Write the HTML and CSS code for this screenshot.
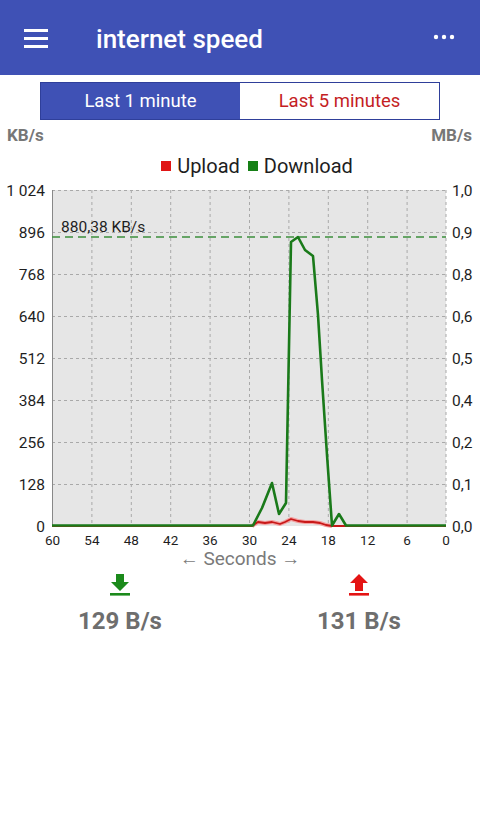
FILE: index.html
```html
<!DOCTYPE html>
<html>
	<head>
		<meta charset="UTF-8">
		<title>internet speed</title>
		<link rel="stylesheet" href="styles.css">
	</head>
	<body>
		<div id="bar">
			<svg class="menu" width="24" height="20" viewBox="0 0 24 20">
				<rect x="0" y="1" width="24" height="3" fill="#fff"/>
				<rect x="0" y="9" width="24" height="3" fill="#fff"/>
				<rect x="0" y="17" width="24" height="3" fill="#fff"/>
			</svg>
			<div class="title">internet speed</div>
			<svg class="more" width="22" height="6" viewBox="0 0 22 6">
				<circle cx="3" cy="3" r="2.2" fill="#fff"/>
				<circle cx="11" cy="3" r="2.2" fill="#fff"/>
				<circle cx="19" cy="3" r="2.2" fill="#fff"/>
			</svg>
		</div>

		<div id="tabs">
			<div class="tab on">Last 1 minute</div>
			<div class="tab off">Last 5 minutes</div>
		</div>

		<div class="units">
			<span>KB/s</span>
			<span>MB/s</span>
		</div>

		<div class="legend">
			<i class="sq red"></i><span>Upload</span>
			<i class="sq green"></i><span>Download</span>
		</div>

		<svg class="chart" width="480" height="372" viewBox="0 178 480 372">
			<!-- fond -->
			<rect x="52" y="190" width="394" height="336" fill="#e6e6e6"/>
			<!-- grille horizontale -->
			<g stroke="#a9a9a9" stroke-width="1" stroke-dasharray="3 3">
				<line x1="52" y1="190.5" x2="446" y2="190.5"/>
				<line x1="52" y1="232.5" x2="446" y2="232.5"/>
				<line x1="52" y1="274.5" x2="446" y2="274.5"/>
				<line x1="52" y1="316.5" x2="446" y2="316.5"/>
				<line x1="52" y1="358.5" x2="446" y2="358.5"/>
				<line x1="52" y1="400.5" x2="446" y2="400.5"/>
				<line x1="52" y1="442.5" x2="446" y2="442.5"/>
				<line x1="52" y1="484.5" x2="446" y2="484.5"/>
			</g>
			<!-- grille verticale -->
			<g stroke="#a9a9a9" stroke-width="1" stroke-dasharray="3 3">
				<line x1="91.9" y1="190" x2="91.9" y2="526"/>
				<line x1="131.3" y1="190" x2="131.3" y2="526"/>
				<line x1="170.7" y1="190" x2="170.7" y2="526"/>
				<line x1="210.1" y1="190" x2="210.1" y2="526"/>
				<line x1="249.5" y1="190" x2="249.5" y2="526"/>
				<line x1="288.9" y1="190" x2="288.9" y2="526"/>
				<line x1="328.3" y1="190" x2="328.3" y2="526"/>
				<line x1="367.7" y1="190" x2="367.7" y2="526"/>
				<line x1="407.1" y1="190" x2="407.1" y2="526"/>
				<line x1="446" y1="190" x2="446" y2="526"/>
			</g>
			<line x1="52.5" y1="190" x2="52.5" y2="527" stroke="#888" stroke-width="1"/>

			<!-- max -->
			<line x1="52" y1="237" x2="446" y2="237" stroke="#3d8f3d" stroke-width="1.3" stroke-dasharray="8 5"/>
			<text x="61" y="232" class="lbl">880,38 KB/s</text>

			<!-- upload -->
			<polyline fill="none" stroke="#f3a0a0" stroke-width="4" stroke-linejoin="round"
				points="252,526 258,522 265,523 272,522 280,524 285,522 291,519 298,521 305,522 313,522 320,523 326,525 332,526"/>
			<polyline fill="none" stroke="#c81818" stroke-width="1.8" stroke-linejoin="round"
				points="52,526 252,526 258,522 265,523 272,522 280,524 285,522 291,519 298,521 305,522 313,522 320,523 326,525 332,526 446,526"/>
			<!-- download -->
			<polyline fill="none" stroke="#1a7a1a" stroke-width="2.6" stroke-linejoin="round"
				points="52,525.5 253,525.5 262,508 272,483 279,514 286,503 291,242 298,237 305,250 313,256 318,315 322,380 327,455 332,525.5 339,514 346,525.5 446,525.5"/>

			<!-- axe gauche -->
			<g class="lbl" text-anchor="end">
				<text x="45" y="195.5">1 024</text>
				<text x="45" y="237.5">896</text>
				<text x="45" y="279.5">768</text>
				<text x="45" y="321.5">640</text>
				<text x="45" y="363.5">512</text>
				<text x="45" y="405.5">384</text>
				<text x="45" y="447.5">256</text>
				<text x="45" y="489.5">128</text>
				<text x="45" y="531.5">0</text>
			</g>
			<!-- axe droit -->
			<g class="lbl">
				<text x="452" y="195.5">1,0</text>
				<text x="452" y="237.5">0,9</text>
				<text x="452" y="279.5">0,8</text>
				<text x="452" y="321.5">0,6</text>
				<text x="452" y="363.5">0,5</text>
				<text x="452" y="405.5">0,4</text>
				<text x="452" y="447.5">0,2</text>
				<text x="452" y="489.5">0,1</text>
				<text x="452" y="531.5">0,0</text>
			</g>
			<!-- axe x -->
			<g class="xl" text-anchor="middle">
				<text x="52.5" y="545">60</text>
				<text x="91.9" y="545">54</text>
				<text x="131.3" y="545">48</text>
				<text x="170.7" y="545">42</text>
				<text x="210.1" y="545">36</text>
				<text x="249.5" y="545">30</text>
				<text x="288.9" y="545">24</text>
				<text x="328.3" y="545">18</text>
				<text x="367.7" y="545">12</text>
				<text x="407.1" y="545">6</text>
				<text x="446" y="545">0</text>
			</g>
		</svg>

		<div class="seconds">&larr; Seconds &rarr;</div>

		<div class="stats">
			<div class="stat">
				<svg width="20" height="22" viewBox="0 0 20 22">
					<path d="M6 0h8v8h5l-9 9-9-9h5z" fill="#1b8a1b"/>
					<rect x="0" y="19" width="20" height="2.6" fill="#1b8a1b"/>
				</svg>
				<div class="val">129 B/s</div>
			</div>
			<div class="stat">
				<svg width="20" height="22" viewBox="0 0 20 22">
					<path d="M10 0l9 9h-5v8h-8v-8h-5z" fill="#e41414"/>
					<rect x="0" y="19" width="20" height="2.6" fill="#e41414"/>
				</svg>
				<div class="val">131 B/s</div>
			</div>
		</div>
	</body>
</html>
```

FILE: styles.css
```css
*{padding: 0;margin: 0;box-sizing: border-box;}
body{background: #fff;font-family: Roboto, "Liberation Sans", sans-serif;width: 480px;}
#bar{height: 75px;background: #3f51b5;display: flex;align-items: center;padding: 0 25px 0 24px;color: #fff;}
#bar .menu{display: block;}
#bar .title{font-size: 26px;font-weight: 500;margin-left: 48px;flex: 1;margin-top: 2px;}
#bar .more{display: block;margin-top: -2px;}
#tabs{display: flex;width: 400px;height: 38px;margin: 7px auto 0;border: 1.5px solid #2f3f9a;}
#tabs .tab{flex: 1;display: flex;align-items: center;justify-content: center;font-size: 18.5px;}
#tabs .on{background: #3f51b5;color: #fff;}
#tabs .off{background: #fff;color: #c41e24;}
.units{display: flex;justify-content: space-between;padding: 0 8px 0 7px;margin-top: 5px;font-size: 17px;line-height: 20px;height: 20px;font-weight: 700;color: #777;}
.legend{display: flex;align-items: center;justify-content: center;height: 33px;padding: 8px 0 0 34px;font-size: 20px;color: #1e1e1e;}
.legend .sq{display: inline-block;width: 10px;height: 10px;margin-right: 6px;}
.legend .red{background: #e01515;}
.legend .green{background: #168016;margin-left: 8px;}
.chart{display: block;}
.lbl{font-size: 15.5px;fill: #1e1e1e;font-family: Roboto, "Liberation Sans", sans-serif;}
.xl{font-size: 13.5px;fill: #1e1e1e;font-family: Roboto, "Liberation Sans", sans-serif;}
.seconds{text-align: center;font-size: 19px;color: #7a7a7a;height: 18px;line-height: 18px;}
.stats{display: flex;justify-content: space-between;padding: 0 78px 0 77px;margin-top: 6px;}
.stat{display: flex;flex-direction: column;align-items: center;width: 86px;}
.stat svg{display: block;}
.stat .val{font-size: 24px;line-height: 28px;font-weight: 700;color: #6e6e6e;margin-top: 11px;}
```
